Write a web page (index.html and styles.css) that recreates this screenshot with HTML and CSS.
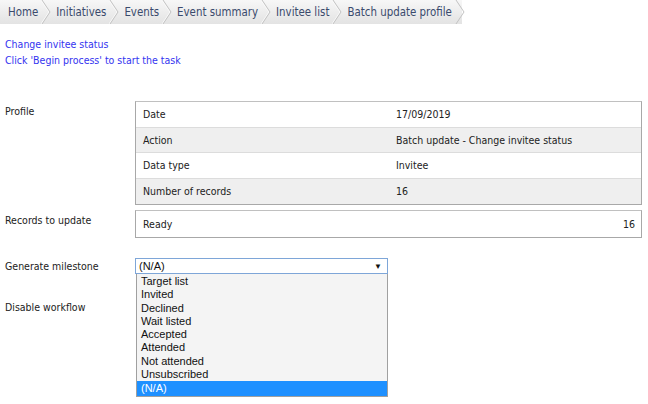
FILE: index.html
```html
<!DOCTYPE html>
<html>
<head>
<meta charset="utf-8">
<link rel="stylesheet" href="styles.css">
</head>
<body>
<nav class="crumbs">
  <span class="crumb">Home<svg class="chev" width="10" height="24" viewBox="0 0 10 24"><path d="M1 0 L9 12 L1 24" fill="none" stroke="#fbfbfb" stroke-width="1" transform="translate(-1 0)"/><path d="M1 0 L9 12 L1 24" fill="none" stroke="#c2c2c2" stroke-width="1"/></svg></span>
  <span class="crumb">Initiatives<svg class="chev" width="10" height="24" viewBox="0 0 10 24"><path d="M1 0 L9 12 L1 24" fill="none" stroke="#fbfbfb" stroke-width="1" transform="translate(-1 0)"/><path d="M1 0 L9 12 L1 24" fill="none" stroke="#c2c2c2" stroke-width="1"/></svg></span>
  <span class="crumb">Events<svg class="chev" width="10" height="24" viewBox="0 0 10 24"><path d="M1 0 L9 12 L1 24" fill="none" stroke="#fbfbfb" stroke-width="1" transform="translate(-1 0)"/><path d="M1 0 L9 12 L1 24" fill="none" stroke="#c2c2c2" stroke-width="1"/></svg></span>
  <span class="crumb">Event summary<svg class="chev" width="10" height="24" viewBox="0 0 10 24"><path d="M1 0 L9 12 L1 24" fill="none" stroke="#fbfbfb" stroke-width="1" transform="translate(-1 0)"/><path d="M1 0 L9 12 L1 24" fill="none" stroke="#c2c2c2" stroke-width="1"/></svg></span>
  <span class="crumb">Invitee list<svg class="chev" width="10" height="24" viewBox="0 0 10 24"><path d="M1 0 L9 12 L1 24" fill="none" stroke="#fbfbfb" stroke-width="1" transform="translate(-1 0)"/><path d="M1 0 L9 12 L1 24" fill="none" stroke="#c2c2c2" stroke-width="1"/></svg></span>
  <span class="crumb last">Batch update profile<svg class="chev" width="10" height="24" viewBox="0 0 10 24"><path d="M1 0 L9 12 L1 24" fill="none" stroke="#c2c2c2" stroke-width="1"/></svg></span>
</nav>
<div class="intro">
  <div class="link">Change invitee status</div>
  <div class="link">Click 'Begin process' to start the task</div>
</div>
<div class="form">
  <div class="row">
    <div class="label">Profile</div>
    <div class="box profile">
      <div class="prow"><span class="k">Date</span><span class="v">17/09/2019</span></div>
      <div class="prow alt"><span class="k">Action</span><span class="v">Batch update - Change invitee status</span></div>
      <div class="prow"><span class="k">Data type</span><span class="v">Invitee</span></div>
      <div class="prow alt"><span class="k">Number of records</span><span class="v">16</span></div>
    </div>
  </div>
  <div class="row">
    <div class="label">Records to update</div>
    <div class="box ready"><span>Ready</span><span>16</span></div>
  </div>
  <div class="row milestone">
    <div class="label">Generate milestone</div>
    <div class="select">
      <div class="current"><span>(N/A)</span><span class="caret">▼</span></div>
      <div class="options">
        <div class="opt">Target list</div>
        <div class="opt">Invited</div>
        <div class="opt">Declined</div>
        <div class="opt">Wait listed</div>
        <div class="opt">Accepted</div>
        <div class="opt">Attended</div>
        <div class="opt">Not attended</div>
        <div class="opt">Unsubscribed</div>
        <div class="opt sel">(N/A)</div>
      </div>
    </div>
  </div>
  <div class="row workflow">
    <div class="label">Disable workflow</div>
  </div>
</div>
</body>
</html>
```
FILE: styles.css
```css
* { box-sizing: border-box; }
html, body { margin: 0; padding: 0; background: #fff; }
body {
  min-height: 404px;
  font-family: "DejaVu Sans Condensed", "DejaVu Sans", Verdana, sans-serif;
  font-stretch: condensed;
  font-size: 10.5px;
  color: #222;
}
.crumbs {
  display: flex;
  height: 24px;
  width: 462px;
  background: linear-gradient(#f7f7f7, #e3e3e3);
  white-space: nowrap;
}
.crumb {
  display: flex;
  align-items: center;
  height: 24px;
  padding-left: 5px;
  font-size: 11.4px;
  color: #3a4a6c;
}
.crumb:first-child { padding-left: 8px; }
.chev { flex: none; margin-left: 3px; }
.intro { padding: 12px 5px 0; }
.link { color: #3434f0; line-height: 16px; }
.form { padding: 33px 6px 0 5px; }
.row { display: flex; margin-bottom: 5px; }
.label { width: 130px; flex: none; padding-top: 4px; }
.box { flex: 1; border: 1px solid #a8a8a8; border-top-color: #c0c0c0; }
.prow { display: flex; height: 25.5px; align-items: center; padding-left: 7px; border-bottom: 1px solid #dcdcdc; }
.prow:last-child { border-bottom: 0; }
.prow.alt { background: #efefef; }
.k { width: 253px; }
.ready { height: 28px; display: flex; align-items: center; justify-content: space-between; padding: 0 6px 0 7px; }
.milestone { margin-top: 20px; }
.milestone .label { padding-top: 2px; }
.select { position: relative; width: 253px; font-family: "Liberation Sans", Arial, sans-serif; font-stretch: normal; font-size: 11px; color: #111; }
.current {
  display: flex; justify-content: space-between; align-items: center;
  height: 16px; padding: 0 5px 0 3px;
  border: 1px solid #7ea6d8; background: #fff;
}
.caret { font-size: 8px; }
.options {
  position: absolute; left: 1px; right: 0; top: 16px; z-index: 2;
  border: 1px solid #a0a0a0; border-top: 0; background: #f4f4f4; padding-top: 1px;
}
.opt { height: 13.25px; line-height: 13px; padding-left: 4px; }
.opt.sel { background: #1e90ff; color: #fff; height: 15px; line-height: 15px; }
.workflow { margin-top: 23px; }
```
